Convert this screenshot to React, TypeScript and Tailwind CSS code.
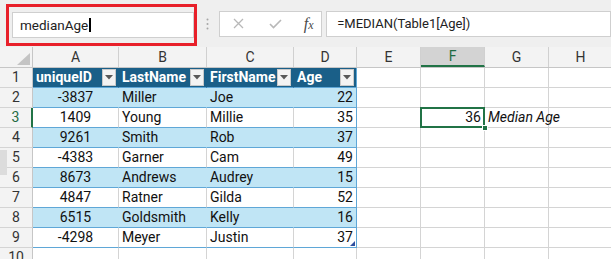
import React from "react";

const W = [33, 86, 88, 87, 63, 64, 64, 64, 64];
const COLS = ["A", "B", "C", "D", "E", "F", "G", "H", ""];

const DATA: [string, string, string, string][] = [
  ["-3837", "Miller", "Joe", "22"],
  ["1409", "Young", "Millie", "35"],
  ["9261", "Smith", "Rob", "37"],
  ["-4383", "Garner", "Cam", "49"],
  ["8673", "Andrews", "Audrey", "15"],
  ["4847", "Ratner", "Gilda", "52"],
  ["6515", "Goldsmith", "Kelly", "16"],
  ["-4298", "Meyer", "Justin", "37"],
];

const HEAD = ["uniqueID", "LastName", "FirstName", "Age"];

function Drop() {
  return (
    <div className="absolute right-[2px] top-[1px] w-[14px] h-[17px] bg-[#f3f3f3] border border-[#c9c9c9] flex items-center justify-center">
      <svg width="8" height="5" viewBox="0 0 8 5">
        <path d="M0 0 L8 0 L4 4.5 Z" fill="#595959" />
      </svg>
    </div>
  );
}

function RowHeader({ n, sel }: { n: number; sel?: boolean }) {
  return (
    <div
      className={`shrink-0 h-full flex items-center justify-center bg-[#f3f3f3] border-b border-[#d4d4d4] ${
        sel ? "border-r-2 border-r-[#217346] text-[#1e6b42]" : "border-r border-r-[#c6c6c6] text-[#333]"
      }`}
      style={{ width: W[0] }}
    >
      {n}
    </div>
  );
}

export default function App() {
  const rows = [];
  for (let r = 1; r <= 10; r++) {
    const cells = [];
    for (let c = 1; c <= 8; c++) {
      const w = W[c];
      const inTable = r <= 9 && c <= 4;
      let cls = "shrink-0 h-full relative flex items-center px-[3px] whitespace-nowrap ";
      let content: React.ReactNode = null;
      if (inTable) {
        const isD = c === 4;
        if (r === 1) {
          cls += "bg-[#1a5f88] text-white font-bold border-b border-b-[#5fa7d7] ";
          cls += isD ? "border-r border-r-[#5fa7d7] " : "border-r border-r-[#1a5f88] ";
          content = (
            <>
              <span>{HEAD[c - 1]}</span>
              <Drop />
            </>
          );
        } else {
          const band = r % 2 === 0;
          cls += band ? "bg-[#c0e5f5] " : "bg-white ";
          cls += "border-b border-b-[#5fa7d7] ";
          cls += isD
            ? "border-r border-r-[#5fa7d7] "
            : band
            ? "border-r border-r-[#c0e5f5] "
            : "border-r border-r-[#d4d4d4] ";
          const v = DATA[r - 2][c - 1];
          if (c === 1) cls += "justify-center ";
          if (c === 4) cls += "justify-end ";
          content = <span>{v}</span>;
          if (r === 9 && c === 4) {
            content = (
              <>
                <span>{v}</span>
                <svg className="absolute right-[1px] bottom-[1px]" width="5" height="5" viewBox="0 0 5 5">
                  <path d="M5 0 L5 5 L0 5 Z" fill="#2f4f9f" />
                </svg>
              </>
            );
          }
        }
      } else {
        cls += "bg-white border-r border-r-[#d4d4d4] border-b border-b-[#d4d4d4] ";
        if (r === 3 && c === 6) {
          cls += "justify-end ";
          content = (
            <>
              <span>36</span>
              <div className="absolute left-[-1px] top-[-1px] right-[-1px] bottom-[-1px] border-2 border-[#217346]" />
              <div className="absolute right-[-4px] bottom-[-4px] w-[6px] h-[6px] bg-[#217346] border border-white z-10" />
            </>
          );
        }
        if (r === 3 && c === 7) {
          content = <span className="italic absolute left-[3px] z-10">Median Age</span>;
        }
      }
      cells.push(
        <div key={c} className={cls} style={{ width: w }}>
          {content}
        </div>
      );
    }
    rows.push(
      <div key={r} className="flex h-[20px]">
        <RowHeader n={r} sel={r === 3} />
        {cells}
      </div>
    );
  }

  return (
    <div
      className="w-[611px] h-[259px] overflow-hidden bg-white relative text-[14px] text-[#111]"
      style={{ fontFamily: "Roboto, 'Liberation Sans', sans-serif" }}
    >
      {/* toolbar */}
      <div className="h-[47px] bg-[#efefef] flex items-center">
        <div className="ml-[6px] w-[195px] h-[42px] border-[3px] border-[#e8202a] flex items-center mt-[3px]">
          <div className="ml-[3px] w-[182px] h-[26px] bg-white border border-[#cfcfcf] flex items-center pl-[7px] text-[13.5px] text-[#222]">
            medianAge
            <span className="inline-block w-[1.5px] h-[14px] bg-black ml-[1px]" />
          </div>
        </div>
        <div className="w-[23px] flex justify-center">
          <svg width="3" height="12" viewBox="0 0 3 12">
            <circle cx="1.5" cy="1.5" r="1" fill="#a6a6a6" />
            <circle cx="1.5" cy="6" r="1" fill="#a6a6a6" />
            <circle cx="1.5" cy="10.5" r="1" fill="#a6a6a6" />
          </svg>
        </div>
        <div className="w-[109px] h-[26px] bg-white border border-[#cfcfcf] flex items-center">
          <svg className="ml-[13px]" width="11" height="11" viewBox="0 0 11 11">
            <path d="M1 1 L10 10 M10 1 L1 10" stroke="#b8b8b8" strokeWidth="1.3" />
          </svg>
          <svg className="ml-[25px]" width="13" height="10" viewBox="0 0 13 10">
            <path d="M1 5 L4.5 8.5 L12 1" stroke="#b8b8b8" strokeWidth="1.6" fill="none" />
          </svg>
          <span
            className="ml-[22px] italic text-[#4a4a4a] text-[16px] leading-none"
            style={{ fontFamily: "'Liberation Serif', serif" }}
          >
            f<span className="text-[12px]">x</span>
          </span>
        </div>
        <div className="ml-[4px] w-[300px] h-[26px] bg-white border border-[#cfcfcf] flex items-center pl-[10px] text-[13px] text-[#222]">
          =MEDIAN(Table1[Age])
        </div>
      </div>

      {/* column headers */}
      <div className="flex h-[21px] bg-[#f3f3f3] border-b border-[#c6c6c6] text-[#333]">
        <div className="shrink-0 h-full border-r border-[#c6c6c6] relative" style={{ width: W[0] }}>
          <svg className="absolute right-[2px] bottom-[2px]" width="13" height="12" viewBox="0 0 13 12">
            <path d="M13 0 L13 12 L0 12 Z" fill="#c4c4c4" />
          </svg>
        </div>
        {COLS.slice(0, 8).map((l, i) => (
          <div
            key={l}
            className={`shrink-0 h-full flex items-center justify-center border-r border-[#d0d0d0] ${
              l === "F" ? "bg-[#d3d3d3] border-b-2 border-b-[#217346] text-[#1e6b42]" : ""
            }`}
            style={{ width: W[i + 1] }}
          >
            {l}
          </div>
        ))}
      </div>

      {rows}

      <div className="absolute left-0 top-[150px] w-[7px] h-[25px] bg-[#dcdcdc]" />
    </div>
  );
}
